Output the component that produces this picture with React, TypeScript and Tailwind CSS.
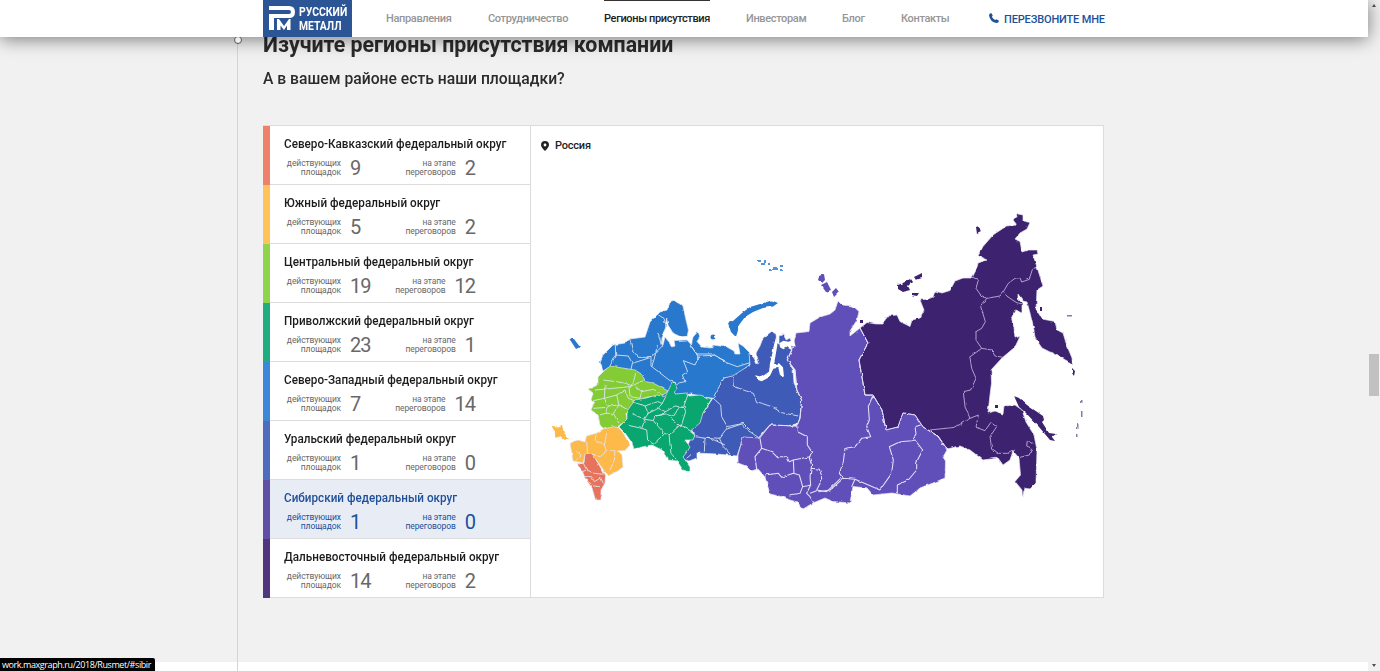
import React from "react";

type Region = { name: string; active: number; talks: number; bar: string; selected?: boolean };

const regions: Region[] = [
  { name: "Северо-Кавказский федеральный округ", active: 9, talks: 2, bar: "bg-[#ef806c]" },
  { name: "Южный федеральный округ", active: 5, talks: 2, bar: "bg-[#ffc35a]" },
  { name: "Центральный федеральный округ", active: 19, talks: 12, bar: "bg-[#8fd44c]" },
  { name: "Приволжский федеральный округ", active: 23, talks: 1, bar: "bg-[#1eae80]" },
  { name: "Северо-Западный федеральный округ", active: 7, talks: 14, bar: "bg-[#3c87d8]" },
  { name: "Уральский федеральный округ", active: 1, talks: 0, bar: "bg-[#4f6cbf]" },
  { name: "Сибирский федеральный округ", active: 1, talks: 0, bar: "bg-[#5f4fa6]", selected: true },
  { name: "Дальневосточный федеральный округ", active: 14, talks: 2, bar: "bg-[#50357f]" },
];

const nav = [
  { label: "Направления", w: "w-[66px]" },
  { label: "Сотрудничество", w: "w-[80px]" },
  { label: "Регионы присутствия", w: "w-[106px]", current: true },
  { label: "Инвесторам", w: "w-[60px]" },
  { label: "Блог", w: "w-[23px]" },
  { label: "Контакты", w: "w-[48px]" },
];

function Logo() {
  return (
    <div className="flex h-[37px] w-[89px] shrink-0 items-center bg-[#2c5595] pl-[6px]">
      <svg width="27" height="27" viewBox="0 0 27 27" className="shrink-0">
        <path d="M0 1H20Q26 1 26 7T20 13H5V25H0V9H20Q22 9 22 7T20 5H0Z" fill="#fff" />
        <path d="M8 14L10 14L15 21L20 14H21.500V25H18V20.500L15 25L11.500 20.500V25H8Z" fill="#fff" />
      </svg>
      <div className="ml-[3px] mt-px text-[12px] font-bold leading-[14px] text-white">
        <div className="origin-left scale-x-[0.87]">РУССКИЙ</div>
        <div className="origin-left scale-x-[0.86]">МЕТАЛЛ</div>
      </div>
    </div>
  );
}

function Header() {
  return (
    <header className="absolute left-0 top-0 z-10 flex h-[37px] w-[1368px] bg-white pl-[263px] shadow-[0_2px_18px_rgba(0,0,0,0.5)]">
      <Logo />
      <nav className="ml-[34px] flex gap-9 text-[11px] font-medium leading-[37px] tracking-[-0.35px] text-[#969696]">
        {nav.map((n) => (
          <a key={n.label} className={`${n.w} whitespace-nowrap ${n.current ? "border-t border-[#333] leading-[35px] text-[#222]" : ""}`}>
            {n.label}
          </a>
        ))}
      </nav>
      <a className="ml-10 flex items-center whitespace-nowrap pt-px text-[11px] font-medium tracking-[-0.15px] text-[#21509b]">
        <svg width="10" height="10" viewBox="0 0 10 10" className="mb-[2px] mr-[5px]">
          <path d="M2.200 0L3.800 2.500L2.900 3.700Q4 6 6.200 7L7.500 6.200L10 7.800Q9.500 10 7.700 10Q1 9 0 2.200Q.2.600 2.200 0Z" fill="#21509b" />
        </svg>
        <span className="pt-[2px]">ПЕРЕЗВОНИТЕ МНЕ</span>
      </a>
    </header>
  );
}

function Row({ r, last }: { r: Region; last: boolean }) {
  return (
    <li className="flex h-[59px]">
      <span className={`w-[7px] shrink-0 ${r.bar}`} />
      <div className={`w-[260px] pl-[14px] pt-[10px] ${last ? "" : "border-b border-[#dcdcdc]"} ${r.selected ? "bg-[#e8edf5] text-[#21509b]" : "text-[#1c1c1c]"}`}>
        <div className="origin-left scale-x-90 whitespace-nowrap text-[13px] font-medium leading-[16px]">{r.name}</div>
        <div className={`mt-[5px] flex h-[22px] items-center ${r.selected ? "text-[#21509b]" : "text-[#686868]"}`}>
          <div className="w-[57px] text-right text-[8.500px] leading-[9px] tracking-[-0.08px]">
            действующих
            <br />
            площадок
          </div>
          <div className="ml-[9px] w-[33px] text-[20px] leading-[22px] tracking-[-1px]">{r.active}</div>
          <div className="flex w-[92px] items-center justify-end">
            <div className="text-right text-[8.500px] leading-[9px] tracking-[-0.08px]">
              на этапе
              <br />
              переговоров
            </div>
            <div className="ml-[9px] text-[20px] leading-[22px] tracking-[-1px]">{r.talks}</div>
          </div>
        </div>
      </div>
    </li>
  );
}

const crop = (x: number, y: number) => `translate(${x} ${y}) scale(.33333)`;

function RussiaMap() {
  return (
    <svg className="block h-[471px] w-[572px]" viewBox="531 126 572 471">
      <defs>
        <filter id="coast" x="531" y="126" width="573" height="471" filterUnits="userSpaceOnUse" colorInterpolationFilters="sRGB">
          <feTurbulence type="fractalNoise" baseFrequency="0.2" numOctaves="1" seed="4" result="n" />
          <feDisplacementMap in="SourceGraphic" in2="n" scale="3" xChannelSelector="R" yChannelSelector="G" />
        </filter>
      </defs>
      <g filter="url(#coast)" strokeLinejoin="round">
        <g stroke="#e4e6f4" strokeWidth="0.7">
          <path fill="#2878ce" d="M600 362L603 355L613 345L625 343L630 339L645 337L650 322L660 312L667 310L670 302.500L675 301L683 306L686 320L688.500 330L687 337L682 337.500L673 333L668 325L666.500 318L665.500 328L661 338L661.500 345L663 345L665 337L669 342L671.500 347L675 346L674 340.500L687 340L691.500 345L693 337L698 331.500L700 337L697 341.500L702 347L711.500 348L713 345L727 347L734 351L735 354L740 354L738 343L743 346L750 353L750 364L740 373L731.500 377L724 378L713 398.500L691 394L676 396L660 400L638 376L610 367L603 371Z" />
          <path fill="#3d5bb7" d="M713 398L724 378L732.500 376L750 365L749 353L754 358L757 364L759 363L756 353L760 346L763 338L771.500 331.500L776 334L777 343L779 344L779 336L784 334L786 340L790 338L793 346L788 360L793 370L794 383L802 400L800 423L770 430L758 440L743 438L740 447L737 456L717 454L697 453L697 458L689 461L682 459L690 440L691 430L703 413Z" />
          <path fill="#614fb9" d="M796 333L809 331.500L810 323L820 317L830 314L835 310L838 301L842 305L853 306L859 311.500L857 320L850 331L850 336L860 328L868 343L859 360L862 377L865 395L873 395L882 410L888 440L898 427L923 427L938 436.500L947 450L943 457L945.500 461L945 478L933 483L920 488L910 496L892 493L873 495L867 488L853 486.500L851 497L850 503L833 501.500L825 498L813 503L803 509L797 502L790 500L783 497L770 494L765 477L758 469L751 471L746 466L738 463L738 455L743 437L760 438L770 425L797 426L800 418L801.500 400L797 390L795 370L787 360L792 350Z" />
          <path fill="#3d2270" d="M860 328L867 322.500L876 324L883 324L887 316L897 315L900 321.500L910 326.500L912 320L920 318L924 310L920 300L928 299L933 297L935 291L942 293L950 290.500L955 281L963 278L972 278L977 268L978 263L987 260L978 256L983 246.500L993 235L1006.500 226L1017 225L1013 220L1018 214L1023 215L1023 221L1030 222.500L1027 229L1020 233L1015 239L1020 241.500L1022 252L1028 250L1037 250L1038 254L1033 255L1037 267L1043 286L1037 290L1036.500 300L1036 309L1042 319L1055 321.500L1057 330L1063 333L1067 346L1072 358L1072.500 364L1062 358L1042 348L1035 338L1034 330L1030 313L1027 302L1023 301L1018 294L1018 299L1022 303L1022 313L1015 310L1011.500 318L1014 328L1015 338L1020 336.500L1015 347L1002 358L991 370L991.500 383L990 395L988 413L995 411L1003 414L1004 406L1015 405L1022 410L1026 422L1034 435L1037 450L1036 483L1030 489L1025 488L1022.500 497L1022 490L1015 481.500L1020.500 475L1019 458L1013 451L1010 460L1003 465L998 458L983 460L970 450L960 446L947 449L938 436L923 427L915 415L903 413L898 427L886 430L882 410L873 395L865 395L862 377L859 360L868 343Z" />
          <path fill="#614fb9" d="M884 428L888 429L898 427L903 413L915 415L923 427L930 434L900 450L886 440Z" stroke="none" />
          <path fill="none" stroke="#e4e0fa" strokeWidth="1" d="M860 328L868 343L859 360L862 377L865 395L873 395L882 410L886 430L898 427L903 413L915 415L923 427L938 436L947 449" />
          <path fill="#84cc35" d="M610 366L605 370L598 377L598 385L588 389L593 393L591 400L594 403L591 410L598 415L600 425L604 429L617 427L627 420L626 413L632 407L635 401L648 397L662 396L668 391L653 383L645 381.500L643 375L635 370Z" />
          <path fill="#0aa66f" d="M635 400L646 398L657 395L665 397L668 391L672 383L675 382L677 388L675 394L687 393L689 396L700 395L711.500 399L703 413L700 423L691.500 430L695 435L693 440L685 440L690 447L687 452L683 457L690 467L690 472L683 470L677 461L668 460L662 450L652 445L642 447L634 449L632 443L625 433L619 427L627 419L627 411Z" />
          <path fill="#fdb94a" d="M570 443L578 440L585 442L586.500 436L597 433L603 429L617 426L623 432.500L630 445L625 450.500L618 451L622 455L623 467L617 471.500L608 476L600 465L591 453L585 455L583 463L573 461Z" />
          <path fill="#fdb94a" stroke="none" d="M551.500 426L558 426.500L562 425L564 433L569 439L565 440L560 436L555.500 438L554.500 431Z" />
          <path fill="#e7735d" d="M585 454L592 453L597 461.500L602 470L605.500 475L605 483L601 490L601 500L595.500 500L592 488L585 478L582 470L576.500 464L584 463Z" />
        </g>
        <g fill="#2878ce">
          <path d="M728 323L733 321L742 313L750 307L760 304L772 300.500L778 303L773 306.500L763 308L753 312L745 317L739 325L736 337L731 332Z" />
          <path d="M569.500 339L574 339L580 347L576 349Z" />
          <circle cx="713" cy="337" r="2.500" />
          <path opacity="0.8" d="M757 260h4v2h-4zM761 263h4v2h-4zM764 260h2v2h-2zM769 269h3v2h-3zM773 267h4v3h-4zM780 265h3v2h-3zM780 269h3v2h-3zM768 263h2v2h-2z" />
        </g>
        <g fill="#614fb9">
          <path d="M819 276L824 274L825 280L822 283L818 280ZM821 285L827 282L831 290L826 292ZM832 292L836 288L839 292L834 297Z" />
        </g>
        <g fill="#3d2270">
          <path d="M898 285L905 282L910 279L912 282L908 286L910 290L903 292L898 289ZM914 277L922 273L922 278L916 280ZM912 293L919 293L917 296L912 295ZM976 227L979 226L981 232L977 234ZM1040 307h2v4h-2zM1072 368L1075 371L1074 376L1072 373Z" />
          <path d="M1014 396L1019 398L1027 405L1043 416L1044 420L1042 422L1049 433L1056 434L1052 437L1055 441L1050 440L1039 427L1026 413L1019 407Z" />
          <path d="M995 405h3v3h-3zM860 320h3v3h-3z" />
          <path opacity="0.6" d="M1067 315h5v1.500h-5zM1081 400h1.500v3h-1.500zM1081 412h1.500v5h-1.500zM1077 424h1.500v5h-1.500zM1076 434h1.500v3h-1.500z" />
        </g>
        <path transform={crop(650, 250)} fill="#fff" d="M379 258L382 285L376 320L372 342L387 340L399 352L402 380L390 375L385 353L370 356L358 382L335 394L324 390L315 376L335 380L357 365L360 340L366 315L372 285Z" />
        <path transform={crop(650, 250)} fill="#fff" d="M388 280L400 272L415 275L432 270L437 290L424 287L425 300L410 292L400 298L390 292Z" />

        <g fill="none" stroke="#dfe5f5" strokeWidth="2.600">
          <g transform={crop(545, 330)}>
            <path d="M211 45L212 75L195 108M212 75L250 78L262 100L258 118M255 28L262 60L280 82L318 82M262 100L318 82M318 82L350 50L340 10M318 82L318 108L375 152L395 160M395 160L420 155L412 135L428 125L415 92L450 105L462 80L435 45M462 78L505 76L540 92" />
            <path d="M175 150L235 158L262 168L295 150M262 168L272 130M150 180L235 172L262 168M180 165L178 205L190 228L180 250L165 255M145 212L178 205M178 205L215 195L240 180L250 205L268 212M215 195L222 225L190 228M222 225L250 240M222 225L205 250L180 250M205 250L222 280M252 170L255 200L285 205L290 185L272 170M290 185L325 178L348 190M145 235L185 232" />
            <path d="M262 215L300 228L335 215L352 220L362 200M300 228L310 250L298 268L260 250M310 250L340 235L352 220M340 235L362 245L350 255L330 258L325 272L300 268M330 258L362 252L385 260L402 232L418 232L422 245L408 290L378 265M362 245L390 228L415 232L425 205L428 192M325 272L340 290L358 310L372 315L405 285L450 310M300 268L290 295L245 285M290 295L305 300L308 330L325 342L358 312M372 315L378 370L400 395" />
            <path d="M155 310L150 330L178 345L185 310M178 345L185 365L165 380L140 372M185 365L210 362L208 390L195 420M125 335L128 370M92 362L108 375L92 392" />
            <path d="M95 402L115 400L125 420L112 425M125 420L148 430L165 432L178 432M120 440L140 440L148 455L165 445L172 460M130 455L145 468L165 470" />
            <path d="M440 300L450 320L480 325L490 322L540 345M480 325L478 365M425 385L440 372" />
          </g>
          <g transform={crop(650, 250)}>
            <path d="M25 195L42 205L48 225M22 285L15 320L5 350M125 290L140 312L145 330M140 312L190 312L230 338L262 350L300 338" />
            <path d="M248 380L250 408L280 420L310 430L320 455L365 470L395 488L445 498" />
            <path d="M190 445L212 465L215 500L232 530L280 520L300 540" />
          </g>
          <g transform={crop(690, 330)}>
            <path d="M108 298L155 282L172 300L205 322M108 298L88 325L50 322M88 325L100 350L120 372" />
          </g>
        </g>
        <g fill="none" stroke="#e4e0fa" strokeWidth="3.200">
          <g transform={crop(690, 330)}>
            <path d="M210 325L215 355L195 380L200 418M215 355L245 365L260 380L290 380L298 395L310 390L360 380M310 390L312 430M225 435L265 430L275 442L310 430L328 435L338 470L330 490L298 495M320 288L322 305L352 320L352 345L365 365L358 385L365 405L360 440L362 465L338 470M365 415L388 418L398 445L380 480L410 485L452 445M362 465L350 490L360 500L372 520M360 490L380 482" />
            <path d="M205 325L240 285L320 288L330 265L335 210L320 180L315 120L292 90L305 60" />
          </g>
          <g transform={crop(800, 260)}>
            <path d="M218 408L205 440L208 480L200 500L212 530L185 535L165 560L135 565L130 605L118 640L130 655L90 690L55 695M130 655L165 658L240 690L275 640L280 600L268 560L300 545L335 542L348 522L345 500L362 495M165 658L155 680M335 542L345 540L368 570L350 605L350 630L325 660L292 675L292 700" />
          </g>
        </g>
        <g fill="none" stroke="#c5b1df" strokeWidth="2.600">
          <g transform={crop(940, 200)}>
            <path d="M95 230L115 240L108 265L122 285L140 295L180 288L192 272L205 250L225 235L240 233L245 246L268 238L278 205L292 203M192 272L200 288L225 305L245 312M140 295L122 320L130 345L136 365L125 385L108 395L108 420L125 445L88 472M125 445L155 450L165 468L190 472" />
          </g>
          <g transform={crop(930, 340)}>
            <path d="M120 52L125 85L138 115L122 150L100 155L105 200L120 235L145 225L138 262L165 272L182 248L200 260L180 290L185 325L205 340L235 340L255 330M120 235L75 262L0 270M270 352L298 345L305 325L290 318L292 305L310 310" />
          </g>
        </g>
      </g>
    </svg>
  );
}

function Scrollbar() {
  return (
    <div className="flex h-[671px] w-3 shrink-0 flex-col items-center bg-[#f1f1f1]">
      <span className="mt-1 border-x-[2.500px] border-b-[3px] border-x-transparent border-b-[#505050]" />
      <span className="mt-[347px] h-[42px] w-[10px] bg-[#c1c1c1]" />
      <span className="mb-1 mt-auto border-x-[2.500px] border-t-[3px] border-x-transparent border-t-[#505050]" />
    </div>
  );
}

export default function App() {
  return (
    <div className="relative flex h-[671px] w-[1380px] overflow-hidden bg-[#f1f1f1] font-['Roboto','Liberation_Sans',sans-serif]">
      <Header />
      <div className="flex flex-1 flex-col">
        <div className="flex h-[662px]">
          <div className="ml-[237px] h-full w-px bg-[#d5d5d5]" />
          <main className="ml-[25px] w-[841px] pt-[31px]">
            <h1 className="origin-left scale-x-[0.97] whitespace-nowrap text-[22px] font-bold leading-[28px] text-[#2b2b2b]">Изучите регионы присутствия компании</h1>
            <h2 className="mt-[7px] origin-left scale-x-[0.923] whitespace-nowrap text-[17px] font-medium leading-[24px] text-[#2b2b2b]">А в вашем районе есть наши площадки?</h2>
            <section className="mt-[35px] flex h-[473px] border-y border-r border-[#dcdcdc] bg-white">
              <ul className="w-[268px] shrink-0 border-r border-[#dcdcdc]">
                {regions.map((r, i) => (
                  <Row key={r.name} r={r} last={i === regions.length - 1} />
                ))}
              </ul>
              <div className="relative">
                <RussiaMap />
                <div className="absolute left-[10px] top-[13px] flex items-center text-[11px] font-medium leading-[14px] tracking-[-0.2px] text-[#222]">
                  <svg width="8" height="10" viewBox="0 0 8 10" className="mr-[6px]">
                    <path fillRule="evenodd" d="M4 0a4 4 0 0 1 4 4Q8 6 4 10Q0 6 0 4a4 4 0 0 1 4-4ZM4 2.600a1.400 1.400 0 1 0 0 2.800a1.400 1.400 0 0 0 0-2.800Z" fill="#222" />
                  </svg>
                  Россия
                </div>
              </div>
            </section>
          </main>
        </div>
        <div className="h-[9px] bg-white">
          <div className="ml-[237px] h-full w-px bg-[#d5d5d5]" />
        </div>
      </div>
      <span className="absolute left-[234px] top-[36px] z-20 h-[8px] w-[8px] rounded-full border border-[#555] bg-[#eee] [clip-path:inset(1px_0_0_0)]" />
      <Scrollbar />
      <div className="absolute bottom-0 left-0 h-[13px] w-[155px] whitespace-nowrap rounded-tr-[2px] bg-black pl-[2px] font-['Open_Sans',sans-serif] text-[9px] leading-[14px] tracking-[-0.42px] text-white">
        work.maxgraph.ru/2018/Rusmet/#sibir
      </div>
    </div>
  );
}
